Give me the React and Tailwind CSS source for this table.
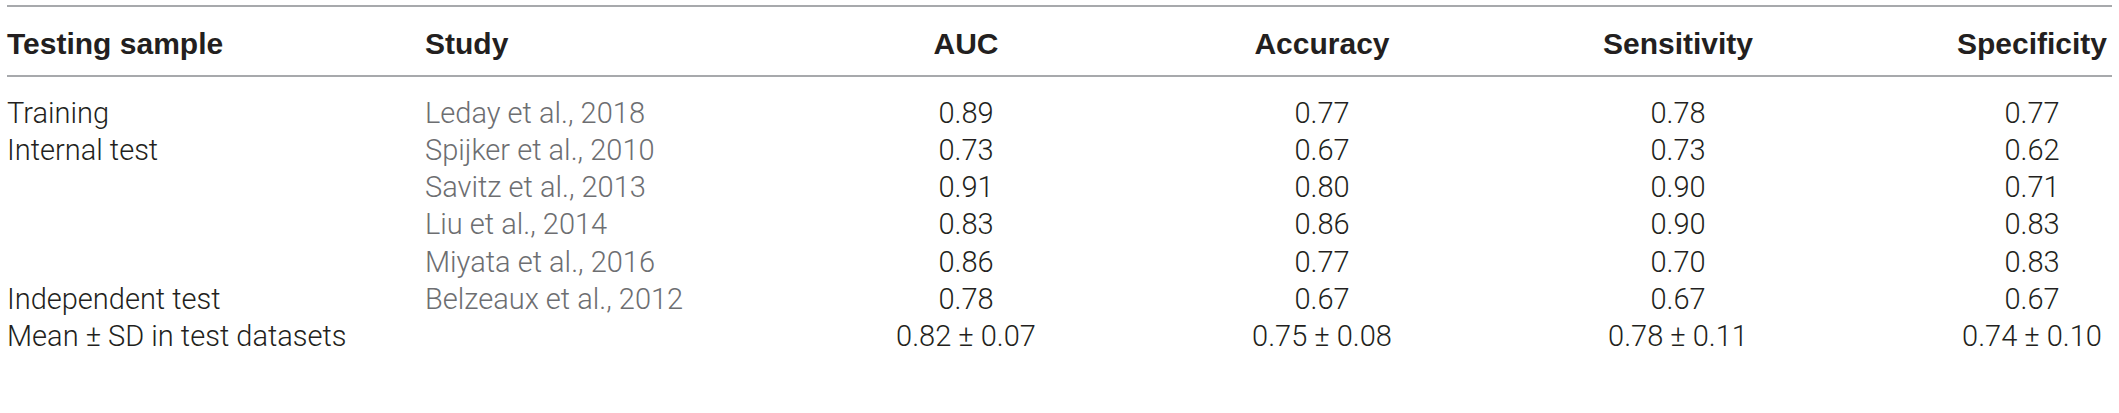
import React from "react";

const rows = [
  ["Training", "Leday et al., 2018", "0.89", "0.77", "0.78", "0.77"],
  ["Internal test", "Spijker et al., 2010", "0.73", "0.67", "0.73", "0.62"],
  ["", "Savitz et al., 2013", "0.91", "0.80", "0.90", "0.71"],
  ["", "Liu et al., 2014", "0.83", "0.86", "0.90", "0.83"],
  ["", "Miyata et al., 2016", "0.86", "0.77", "0.70", "0.83"],
  ["Independent test", "Belzeaux et al., 2012", "0.78", "0.67", "0.67", "0.67"],
  ["Mean \u00b1 SD in test datasets", "", "0.82 \u00b1 0.07", "0.75 \u00b1 0.08", "0.78 \u00b1 0.11", "0.74 \u00b1 0.10"],
];

const grid = "grid grid-cols-[418px_363px_356px_356px_356px_252px]";

export default function App() {
  return (
    <div className="w-[2119px] h-[413px] bg-white pt-[5px] pl-[7px] text-[#231f20]">
      <div className="w-[2105px] border-t-2 border-[#a7a9ac]">
        <div className={`${grid} h-[70px] items-center pt-[5px] border-b-2 border-[#a7a9ac] font-['Liberation_Sans',Arial,sans-serif] font-bold text-[30px] leading-none`}>
          <div className="whitespace-nowrap">Testing sample</div>
          <div>Study</div>
          <div className="text-center">AUC</div>
          <div className="text-center">Accuracy</div>
          <div className="text-center">Sensitivity</div>
          <div className="text-center pl-[100px] whitespace-nowrap">Specificity</div>
        </div>
        <div className="pt-[18px] font-['Roboto',sans-serif] font-light text-[29px] leading-none">
          {rows.map((r, i) => (
            <div key={i} className={`${grid} h-[37.15px] items-center`}>
              <div className="whitespace-nowrap">{r[0]}</div>
              <div className="text-[#6d6e71] whitespace-nowrap">{r[1]}</div>
              <div className="text-center whitespace-nowrap">{r[2]}</div>
              <div className="text-center whitespace-nowrap">{r[3]}</div>
              <div className="text-center whitespace-nowrap">{r[4]}</div>
              <div className="text-center pl-[100px] whitespace-nowrap">{r[5]}</div>
            </div>
          ))}
        </div>
      </div>
    </div>
  );
}
